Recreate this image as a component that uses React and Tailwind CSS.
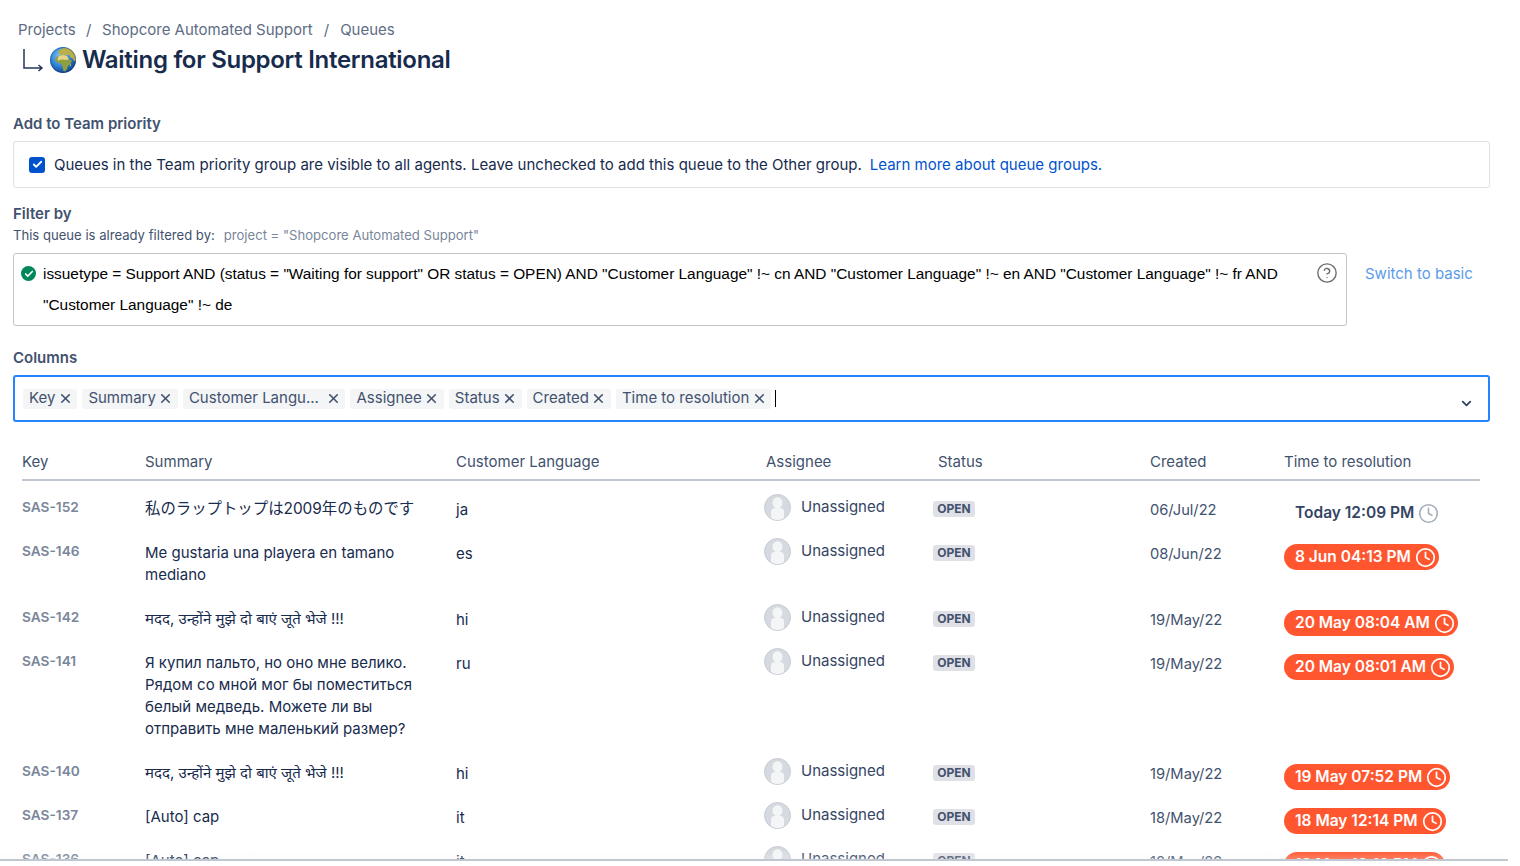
import { Clock, ChevronDown, X, Check, CircleHelp } from "lucide-react";

const FONT = "font-['Inter','Noto_Sans','Noto_Sans_CJK_JP',sans-serif]";

const tags = [
  { label: "Key" },
  { label: "Summary" },
  { label: "Customer Langu...", wide: true },
  { label: "Assignee" },
  { label: "Status" },
  { label: "Created" },
  { label: "Time to resolution" },
];

const columns = [
  { label: "Key", className: "w-[123px]" },
  { label: "Summary", className: "w-[311px]" },
  { label: "Customer Language", className: "w-[310px]" },
  { label: "Assignee", className: "w-[172px]" },
  { label: "Status", className: "w-[212px]" },
  { label: "Created", className: "w-[134px]" },
  { label: "Time to resolution", className: "w-[196px]" },
];

const rows = [
  {
    id: "SAS-152",
    summary: "私のラップトップは2009年のものです",
    lang: "ja",
    created: "06/Jul/22",
    time: "Today 12:09 PM",
    ok: true,
    cjk: true,
  },
  {
    id: "SAS-146",
    summary: "Me gustaria una playera en tamano mediano",
    lang: "es",
    created: "08/Jun/22",
    time: "8 Jun 04:13 PM",
  },
  {
    id: "SAS-142",
    summary: "मदद, उन्होंने मुझे दो बाएं जूते भेजे !!!",
    lang: "hi",
    created: "19/May/22",
    time: "20 May 08:04 AM",
  },
  {
    id: "SAS-141",
    summary:
      "Я купил пальто, но оно мне велико. Рядом со мной мог бы поместиться белый медведь. Можете ли вы отправить мне маленький размер?",
    lang: "ru",
    created: "19/May/22",
    time: "20 May 08:01 AM",
  },
  {
    id: "SAS-140",
    summary: "मदद, उन्होंने मुझे दो बाएं जूते भेजे !!!",
    lang: "hi",
    created: "19/May/22",
    time: "19 May 07:52 PM",
  },
  {
    id: "SAS-137",
    summary: "[Auto] cap",
    lang: "it",
    created: "18/May/22",
    time: "18 May 12:14 PM",
  },
  {
    id: "SAS-136",
    summary: "[Auto] cap",
    lang: "it",
    created: "18/May/22",
    time: "18 May 12:10 PM",
  },
];

const Globe = () => (
  <svg width="26" height="26" viewBox="0 0 26 26" className="shrink-0">
    <defs>
      <radialGradient id="sea" cx="40%" cy="35%" r="75%">
        <stop offset="0%" stopColor="#8cc8f5" />
        <stop offset="50%" stopColor="#2f86d8" />
        <stop offset="100%" stopColor="#0c2f78" />
      </radialGradient>
      <clipPath id="ball">
        <circle cx="13" cy="13" r="13" />
      </clipPath>
    </defs>
    <circle cx="13" cy="13" r="13" fill="url(#sea)" />
    <g clipPath="url(#ball)">
      {/* europe + asia */}
      <path d="M8 4.500 11 2l5-1.500 6 2 4 5 1 6-3 .5-1.500-2.500-2-1-1-2.500-3 .3-2.500-.8-3 .8-2-1.500z" fill="#b9b04c" />
      {/* africa */}
      <path d="M9.500 8.500l3.500-.6 3 .6 2 1.500 1.500 3 2.500.4-1.500 3-2.500 2.400-.8 3-2 2.600-1.700-.5-.8-3-.7-3-1.700-1.800-2.800-.3-2.400-2.300.7-3z" fill="#8f9f3d" />
      {/* sahara */}
      <path d="M8.800 9l4.200-1 3 .6 1.800 1.400 1 2.500-3 .5-3-.5-2.500.3-2.300 1-.4-2.300z" fill="#e6d289" />
      <path d="M20.500 16.500c.7.4.7 2-.1 3-.6 0-.9-.5-.7-1.300.1-.7.300-1.300.8-1.700z" fill="#b9b04c" />
    </g>
    <circle cx="13" cy="13" r="12.500" fill="none" stroke="#0c2f78" strokeOpacity=".35" />
  </svg>
);

const Avatar = () => (
  <svg width="27" height="27" viewBox="0 0 27 27" className="shrink-0">
    <defs>
      <clipPath id="face">
        <circle cx="13.500" cy="13.500" r="12.500" />
      </clipPath>
    </defs>
    <circle cx="13.500" cy="13.500" r="13" fill="#d5d9e0" stroke="#c6cad2" />
    <g clipPath="url(#face)" fill="#f4f5f7">
      <ellipse cx="13.500" cy="8.800" rx="5" ry="5.600" />
      <rect x="7" y="14" width="13" height="13" rx="4" />
    </g>
  </svg>
);

const Tag = ({ label, wide }) => (
  <span className="flex h-5 items-center rounded-[3px] bg-[#f4f5f7] pr-[4.500px] pl-[6px] text-[15px] text-[#42526e]">
    <span>{label}</span>
    <X size={15} strokeWidth={2.600} className={wide ? "ml-[7px]" : "ml-[2.500px]"} />
  </span>
);

const TimeCell = ({ time, ok }) => (
  <div
    className={`mt-0.5 -mb-[6px] flex h-[26px] w-fit items-center rounded-full pr-[3px] pl-[11px] text-[15.500px] font-semibold ${
      ok ? "text-[#344563]" : "bg-[#ff5630] text-white"
    }`}
  >
    <span>{time}</span>
    <Clock size={21} strokeWidth={ok ? 1.800 : 2} className={`ml-1 ${ok ? "text-[#a5adba]" : "text-white"}`} />
  </div>
);

const Row = ({ row }) => (
  <tr className="align-top">
    <td className="pt-[17px] pb-[5px]">
      <div className="-mt-0.5 text-[13.700px] leading-[22px] font-semibold text-[#7a869a]">{row.id}</div>
    </td>
    <td className={`pt-[17px] pr-[20px] pb-[5px] leading-[22px] text-[#172b4d] ${row.cjk ? "text-[15.400px]" : "text-[15px]"}`}>
      {row.summary}
    </td>
    <td className="pt-[18px] pb-[4px] text-[15px] leading-[22px] text-[#172b4d]">{row.lang}</td>
    <td className="pt-[17px] pb-[5px]">
      <div className="-mt-1 -mb-1 -ml-0.5 flex items-center gap-[10px]">
        <Avatar />
        <span className="text-[15px] text-[#344563]">Unassigned</span>
      </div>
    </td>
    <td className="pt-[17px] pb-[5px]">
      <span className="mt-[3px] -ml-[5px] flex h-4 w-[42px] items-center justify-center rounded-[3px] bg-[#dfe1e6] text-[12px] font-bold text-[#42526e]">
        OPEN
      </span>
    </td>
    <td className="pt-[18px] pb-[4px] text-[14.700px] leading-[22px] text-[#42526e]">{row.created}</td>
    <td className="pt-[17px] pb-[5px]">
      <TimeCell time={row.time} ok={row.ok} />
    </td>
  </tr>
);

export default function App() {
  return (
    <div className={`relative h-[866px] overflow-hidden bg-white ${FONT}`}>
      <nav className="flex items-center pt-[20px] pl-[18px] text-[15px] leading-5 text-[#5e6c84]">
        <span>Projects</span>
        <span className="mx-[10.500px]">/</span>
        <span>Shopcore Automated Support</span>
        <span className="mx-[11px]">/</span>
        <span>Queues</span>
      </nav>

      <div className="mt-1 flex h-8 items-center pl-[22px]">
        <svg width="22" height="24" viewBox="0 0 22 24" fill="none" stroke="#253858" strokeWidth="1.500" className="mr-[6px] shrink-0">
          <path d="M2 1v19h18M16.500 17l3.500 3-3.500 3" />
        </svg>
        <Globe />
        <h1 className="ml-1.5 text-[24px] leading-8 font-semibold tracking-[-0.29px] text-[#172b4d]">
          Waiting for Support International
        </h1>
      </div>

      <div className="pr-[30px] pl-[13px]">
        <div className="mt-[38px] text-[15px] leading-5 font-semibold text-[#42526e]">Add to Team priority</div>
        <div className="mt-[7px] flex h-[47px] items-center rounded-[3px] border border-[#dfe1e6] pl-[15px] text-[15px] text-[#172b4d]">
          <span className="mr-[9px] flex h-4 w-4 items-center justify-center rounded-[3px] bg-[#0052cc]">
            <Check size={11} strokeWidth={4} className="text-white" />
          </span>
          <span className="pt-0.5">Queues in the Team priority group are visible to all agents. Leave unchecked to add this queue to the Other group.</span>
          <span className="ml-2 pt-0.5 text-[#0052cc]">Learn more about queue groups.</span>
        </div>

        <div className="mt-[16px] text-[15px] leading-5 font-semibold text-[#42526e]">Filter by</div>
        <div className="mt-0.5 flex text-[13.100px] leading-[18px]">
          <span className="text-[#42526e]">This queue is already filtered by:</span>
          <span className="ml-[9px] text-[#7a869a]">project = "Shopcore Automated Support"</span>
        </div>

        <div className="mt-[9px] flex items-start">
          <div className="flex h-[73px] w-[1334px] items-start rounded-[3px] border border-[#c4c4c4] pt-[4px] pr-[8px] pl-[7px]">
            <span className="mt-[8px] mr-[7px] flex h-[15px] w-[15px] shrink-0 items-center justify-center rounded-full bg-[#00875a]">
              <Check size={10} strokeWidth={4} className="text-white" />
            </span>
            <p className="w-[1250px] font-['Liberation_Sans',sans-serif] text-[15.400px] leading-[31px] text-black">
              issuetype = Support AND (status = "Waiting for support" OR status = OPEN) AND "Customer Language" !~ cn AND "Customer Language" !~ en AND "Customer Language" !~ fr AND "Customer Language" !~ de
            </p>
            <CircleHelp size={22} strokeWidth={1.500} className="mt-[4px] ml-auto shrink-0 text-[#6b6b6b]" />
          </div>
          <span className="mt-[10px] ml-[18px] text-[15px] text-[#5b9bea]">Switch to basic</span>
        </div>

        <div className="mt-[22px] text-[15px] leading-5 font-semibold text-[#42526e]">Columns</div>
        <div className="mt-[7px] flex h-[47px] items-center gap-[5px] rounded-[3px] border-2 border-[#2684ff] pl-[8px]">
          {tags.map((t) => (
            <Tag key={t.label} label={t.label} wide={t.wide} />
          ))}
          <span className="-ml-px h-[17px] w-px bg-black" />
          <ChevronDown size={15} strokeWidth={3} className="mt-[9px] mr-[14px] ml-auto text-[#344563]" />
        </div>
      </div>

      <table className="mt-[29px] ml-[22px] w-[1458px] table-fixed border-collapse">
        <thead>
          <tr className="border-b-2 border-[#c1c7d0]">
            {columns.map((c) => (
              <th key={c.label} className={`${c.className} pb-[6px] text-left text-[15px] leading-[22px] font-normal text-[#42526e]`}>
                {c.label}
              </th>
            ))}
          </tr>
        </thead>
        <tbody>
          {rows.map((r) => (
            <Row key={r.id} row={r} />
          ))}
        </tbody>
      </table>

      {/* fade over the cut off row + bottom rule */}
      <div className="absolute top-[850px] left-0 h-[9px] w-[1508px] bg-gradient-to-b from-white/0 to-[#f7f7f7]/25" />
      <div className="absolute top-[859px] left-0 h-[2px] w-[1508px] bg-[#c1c7d0]" />
      <div className="absolute top-[861px] left-0 h-[5px] w-full bg-white" />
      <div className="absolute top-[846px] left-[1508px] h-[15px] w-[12px] bg-white" />
    </div>
  );
}
